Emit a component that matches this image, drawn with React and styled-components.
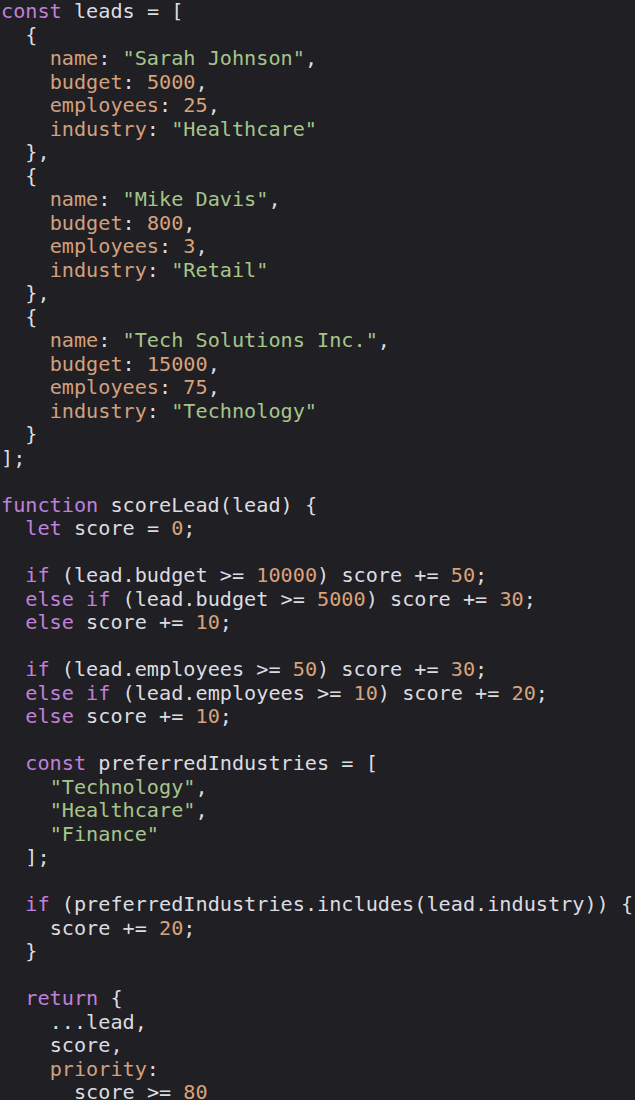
import React from 'react'
import styled, { createGlobalStyle } from 'styled-components'

const GlobalStyle = createGlobalStyle`
  html, body {
    margin: 0;
    padding: 0;
    background: #1f1f24;
  }
`

const Editor = styled.pre`
  margin: 0;
  padding: 0 0 0 1px;
  width: 635px;
  height: 1100px;
  overflow: hidden;
  background: #1f1f24;
  color: #dcdce0;
  font: 20.2px/23.5px 'DejaVu Sans Mono', 'Liberation Mono', monospace;
  box-sizing: border-box;
`

const Line = styled.div`
  height: 23.5px;
  white-space: pre;
`

const colors = {
  keyword: '#c180d8',
  string: '#a6c58b',
  number: '#d9a27a',
  prop: '#d3a07c',
  plain: '#dcdce0'
}

const Token = styled.span`
  color: ${p => colors[p.$kind]};
`

const source = `const leads = [
  {
    name: "Sarah Johnson",
    budget: 5000,
    employees: 25,
    industry: "Healthcare"
  },
  {
    name: "Mike Davis",
    budget: 800,
    employees: 3,
    industry: "Retail"
  },
  {
    name: "Tech Solutions Inc.",
    budget: 15000,
    employees: 75,
    industry: "Technology"
  }
];

function scoreLead(lead) {
  let score = 0;

  if (lead.budget >= 10000) score += 50;
  else if (lead.budget >= 5000) score += 30;
  else score += 10;

  if (lead.employees >= 50) score += 30;
  else if (lead.employees >= 10) score += 20;
  else score += 10;

  const preferredIndustries = [
    "Technology",
    "Healthcare",
    "Finance"
  ];

  if (preferredIndustries.includes(lead.industry)) {
    score += 20;
  }

  return {
    ...lead,
    score,
    priority:
      score >= 80`

const keywords = ['const', 'function', 'let', 'if', 'else', 'return']

// tiny tokenizer, just enough for this snippet
const tokenize = line => {
  const re = /("[^"]*")|(\b\d+\b)|([A-Za-z_]\w*)(?=:)|([A-Za-z_]\w*)|(\s+|.)/g
  const out = []
  let m
  while ((m = re.exec(line))) {
    if (m[1]) out.push(['string', m[1]])
    else if (m[2]) out.push(['number', m[2]])
    else if (m[3]) out.push(['prop', m[3]])
    else if (m[4]) out.push([keywords.includes(m[4]) ? 'keyword' : 'plain', m[4]])
    else out.push(['plain', m[5]])
  }
  return out
}

const App = () => (
  <>
    <GlobalStyle />
    <Editor>
      {source.split('\n').map((line, i) => (
        <Line key={i}>
          {tokenize(line).map(([kind, text], j) => (
            <Token key={j} $kind={kind}>{text}</Token>
          ))}
        </Line>
      ))}
    </Editor>
  </>
)

export default App
